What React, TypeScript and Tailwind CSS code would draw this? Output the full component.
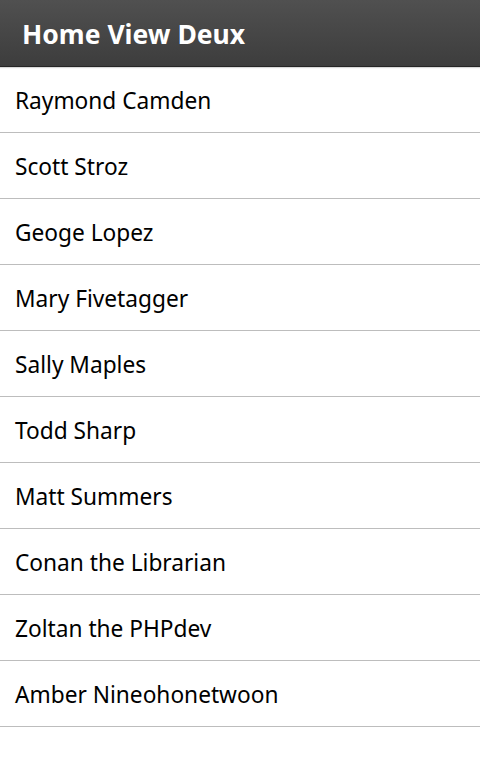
import React from "react";

const names = [
  "Raymond Camden",
  "Scott Stroz",
  "Geoge Lopez",
  "Mary Fivetagger",
  "Sally Maples",
  "Todd Sharp",
  "Matt Summers",
  "Conan the Librarian",
  "Zoltan the PHPdev",
  "Amber Nineohonetwoon",
];

export default function App() {
  return (
    <div
      className="w-[480px] h-[762px] bg-white overflow-hidden"
      style={{ fontFamily: '"Noto Sans", "Open Sans", sans-serif' }}
    >
      <div className="h-[67px] bg-gradient-to-b from-[#505050] to-[#3d3d3d] border-b border-[#262626] flex items-center px-[22px] pt-[3px] shadow-[0_1px_1px_rgba(0,0,0,0.15)]">
        <span className="text-white font-bold text-[26.5px] leading-none">Home View Deux</span>
      </div>
      <ul>
        {names.map((n) => (
          <li
            key={n}
            className="h-[66px] border-b border-[#bdbdbd] flex items-center px-[15px] pt-[4px] text-[22.7px] leading-none text-black"
          >
            {n}
          </li>
        ))}
      </ul>
    </div>
  );
}
